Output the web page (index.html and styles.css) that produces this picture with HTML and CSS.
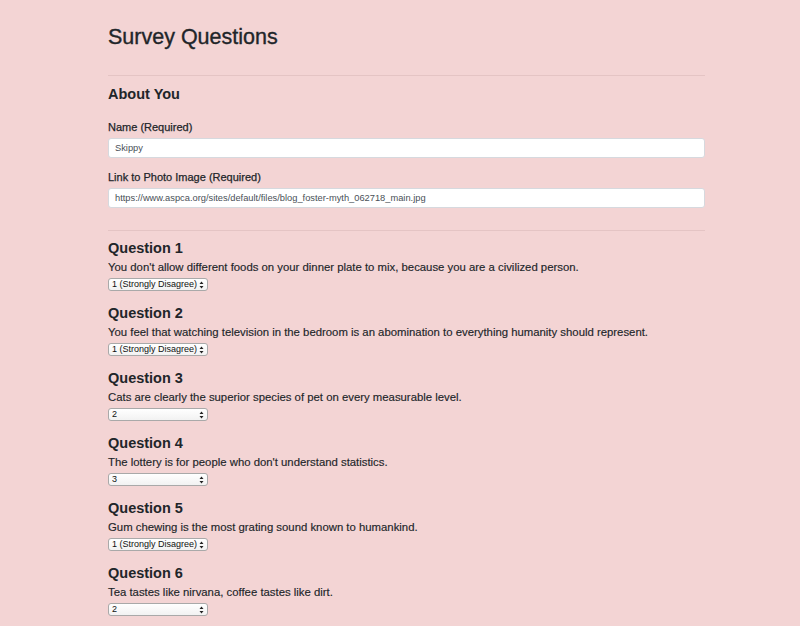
FILE: index.html
```html
<!DOCTYPE html>
<html lang="en">
<head>
<meta charset="utf-8">
<title>Survey Questions</title>
<link rel="stylesheet" href="styles.css">
</head>
<body>
<div class="container">
  <h1 class="title">Survey Questions</h1>
  <hr class="rule">
  <h3 class="section">About You</h3>
  <div class="field">
    <label class="label" for="name">Name (Required)</label>
    <input class="input" id="name" type="text" value="Skippy">
  </div>
  <div class="field">
    <label class="label" for="photo">Link to Photo Image (Required)</label>
    <input class="input" id="photo" type="text" value="https://www.aspca.org/sites/default/files/blog_foster-myth_062718_main.jpg">
  </div>
  <hr class="rule rule-2">

  <div class="question">
    <h3 class="q-title">Question 1</h3>
    <p class="q-text">You don't allow different foods on your dinner plate to mix, because you are a civilized person.</p>
    <span class="select-wrap"><select class="select"><option selected>1 (Strongly Disagree)</option><option>2</option><option>3</option><option>4</option><option>5 (Strongly Agree)</option></select><svg class="arrows" width="5" height="8" viewBox="0 0 5 8"><path d="M2.5 0.5 L4.5 3 L0.5 3 Z M2.5 7.5 L4.5 5 L0.5 5 Z" fill="#222"/></svg></span>
  </div>
  <div class="question">
    <h3 class="q-title">Question 2</h3>
    <p class="q-text">You feel that watching television in the bedroom is an abomination to everything humanity should represent.</p>
    <span class="select-wrap"><select class="select"><option selected>1 (Strongly Disagree)</option><option>2</option><option>3</option><option>4</option><option>5 (Strongly Agree)</option></select><svg class="arrows" width="5" height="8" viewBox="0 0 5 8"><path d="M2.5 0.5 L4.5 3 L0.5 3 Z M2.5 7.5 L4.5 5 L0.5 5 Z" fill="#222"/></svg></span>
  </div>
  <div class="question">
    <h3 class="q-title">Question 3</h3>
    <p class="q-text">Cats are clearly the superior species of pet on every measurable level.</p>
    <span class="select-wrap"><select class="select"><option>1 (Strongly Disagree)</option><option selected>2</option><option>3</option><option>4</option><option>5 (Strongly Agree)</option></select><svg class="arrows" width="5" height="8" viewBox="0 0 5 8"><path d="M2.5 0.5 L4.5 3 L0.5 3 Z M2.5 7.5 L4.5 5 L0.5 5 Z" fill="#222"/></svg></span>
  </div>
  <div class="question">
    <h3 class="q-title">Question 4</h3>
    <p class="q-text">The lottery is for people who don't understand statistics.</p>
    <span class="select-wrap"><select class="select"><option>1 (Strongly Disagree)</option><option>2</option><option selected>3</option><option>4</option><option>5 (Strongly Agree)</option></select><svg class="arrows" width="5" height="8" viewBox="0 0 5 8"><path d="M2.5 0.5 L4.5 3 L0.5 3 Z M2.5 7.5 L4.5 5 L0.5 5 Z" fill="#222"/></svg></span>
  </div>
  <div class="question">
    <h3 class="q-title">Question 5</h3>
    <p class="q-text">Gum chewing is the most grating sound known to humankind.</p>
    <span class="select-wrap"><select class="select"><option selected>1 (Strongly Disagree)</option><option>2</option><option>3</option><option>4</option><option>5 (Strongly Agree)</option></select><svg class="arrows" width="5" height="8" viewBox="0 0 5 8"><path d="M2.5 0.5 L4.5 3 L0.5 3 Z M2.5 7.5 L4.5 5 L0.5 5 Z" fill="#222"/></svg></span>
  </div>
  <div class="question">
    <h3 class="q-title">Question 6</h3>
    <p class="q-text">Tea tastes like nirvana, coffee tastes like dirt.</p>
    <span class="select-wrap"><select class="select"><option>1 (Strongly Disagree)</option><option selected>2</option><option>3</option><option>4</option><option>5 (Strongly Agree)</option></select><svg class="arrows" width="5" height="8" viewBox="0 0 5 8"><path d="M2.5 0.5 L4.5 3 L0.5 3 Z M2.5 7.5 L4.5 5 L0.5 5 Z" fill="#222"/></svg></span>
  </div>
</div>
</body>
</html>
```
FILE: styles.css
```css
html, body {
  margin: 0;
  padding: 0;
}
body {
  background: #f3d4d4;
  color: #212529;
  font-family: "Liberation Sans", Arial, sans-serif;
  overflow: hidden;
}
.container {
  width: 597px;
  margin-left: 108px;
}
.title {
  margin: 25px 0 0;
  font-size: 21.5px;
  line-height: 25px;
  font-weight: normal;
  -webkit-text-stroke: 0.35px currentColor;
}
.rule {
  margin: 25px 0 0;
  border: 0;
  border-top: 1px solid #e4c4c4;
  height: 0;
}
.section {
  margin: 10px 0 0;
  font-size: 14.5px;
  line-height: 17px;
  font-weight: bold;
}
.field {
  display: flex;
  flex-direction: column;
}
.field:first-of-type {
  margin-top: 18px;
}
.field + .field {
  margin-top: 13px;
}
.label {
  font-size: 11px;
  line-height: 13px;
  margin-bottom: 4px;
  -webkit-text-stroke: 0.25px currentColor;
}
.input {
  box-sizing: border-box;
  height: 20px;
  width: 100%;
  margin: 0;
  padding: 0 6px;
  border: 1px solid #d6d9de;
  border-radius: 3px;
  background: #fff;
  color: #495057;
  font-family: "Liberation Sans", Arial, sans-serif;
  font-size: 9.3px;
}
.rule-2 {
  margin-top: 22px;
}
.question {
  display: flex;
  flex-direction: column;
  align-items: flex-start;
  margin-top: 9px;
  height: 56px;
}
.question + .question {
  margin-top: 9px;
}
.q-title {
  margin: 0;
  font-size: 14.5px;
  line-height: 17px;
  font-weight: bold;
}
.q-text {
  margin: 3px 0 0;
  font-size: 11.35px;
  line-height: 14px;
  -webkit-text-stroke: 0.15px currentColor;
}
.select-wrap {
  position: relative;
  display: inline-block;
  margin-top: 4px;
}
.select {
  -webkit-appearance: none;
  appearance: none;
  box-sizing: border-box;
  display: block;
  width: 100px;
  height: 13px;
  margin: 0;
  padding: 0 7px 0 3px;
  border: 1px solid #a9a9a9;
  border-radius: 3px;
  background: linear-gradient(#ffffff, #f2f2f2);
  color: #111;
  font-family: "Liberation Sans", Arial, sans-serif;
  font-size: 9px;
  line-height: 11px;
}
.arrows {
  position: absolute;
  right: 4px;
  top: 2.5px;
  pointer-events: none;
}
```
